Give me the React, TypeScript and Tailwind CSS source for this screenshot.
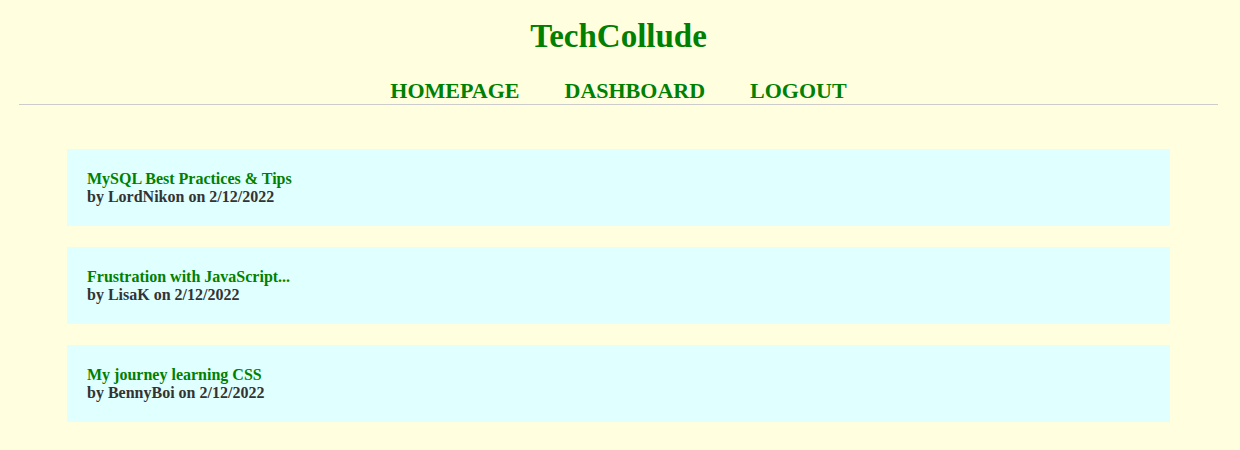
const posts = [
  { title: "MySQL Best Practices & Tips", author: "LordNikon", date: "2/12/2022" },
  { title: "Frustration with JavaScript...", author: "LisaK", date: "2/12/2022" },
  { title: "My journey learning CSS", author: "BennyBoi", date: "2/12/2022" },
];

export default function App() {
  return (
    <div className="min-h-screen bg-[#ffffe0] font-['Liberation_Serif',serif] font-bold">
      <header className="ml-[19px] mr-[22px] border-b border-[#cccccc] pt-[17px] pb-[1px]">
        <h1 className="text-center text-[33px] leading-[38px] text-[#008000]">TechCollude</h1>
        <nav className="mt-[24px] flex justify-center gap-[45px] text-[22px] leading-[24px] text-[#008000]">
          <a href="#">HOMEPAGE</a>
          <a href="#">DASHBOARD</a>
          <a href="#">LOGOUT</a>
        </nav>
      </header>
      <main className="ml-[67px] mr-[70px] mt-[44px] flex flex-col gap-[21px]">
        {posts.map((p) => (
          <div key={p.title} className="bg-[#e0ffff] px-[20px] pt-[21px] pb-[20px] text-[16px] leading-[18px]">
            <div className="text-[#008000]">{p.title}</div>
            <div className="text-[#333333]">
              by {p.author} on {p.date}
            </div>
          </div>
        ))}
      </main>
    </div>
  );
}
